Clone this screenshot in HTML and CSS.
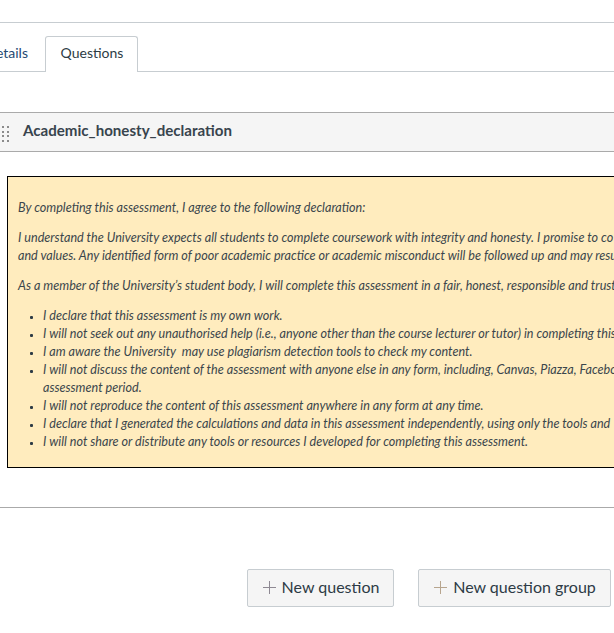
FILE: index.html
```html
<!DOCTYPE html>
<html lang="en">
<head>
<meta charset="utf-8">
<title>Quiz questions</title>
<link rel="stylesheet" href="styles.css">
</head>
<body>
<nav class="tabs"><a class="tab">Details</a><a class="tab active">Questions</a></nav>
<section class="group">
  <header class="group-header">
    <svg class="grip" width="8" height="17" viewBox="0 0 8 17"><path d="M1 0h2v2H1zM6 0h2v2H6zM1 5h2v2H1zM6 5h2v2H6zM1 9h2v2H1zM6 9h2v2H6zM1 14h2v2H1zM6 14h2v2H6z"/></svg>
    <h2>Academic_honesty_declaration</h2>
  </header>
  <div class="declaration">
    <p>By completing this assessment, I agree to the following declaration:</p>
    <p>I understand the University expects all students to complete coursework with integrity and honesty. I promise to co<br>and values. Any identified form of poor academic practice or academic misconduct will be followed up and may resu</p>
    <p>As a member of the University’s student body, I will complete this assessment in a fair, honest, responsible and trust</p>
    <ul>
      <li>I declare that this assessment is my own work.</li>
      <li>I will not seek out any unauthorised help (i.e., anyone other than the course lecturer or tutor) in completing this</li>
      <li>I am aware the University&nbsp; may use plagiarism detection tools to check my content.</li>
      <li>I will not discuss the content of the assessment with anyone else in any form, including, Canvas, Piazza, Facebo<br>assessment period.</li>
      <li>I will not reproduce the content of this assessment anywhere in any form at any time.</li>
      <li>I declare that I generated the calculations and data in this assessment independently, using only the tools and</li>
      <li>I will not share or distribute any tools or resources I developed for completing this assessment.</li>
    </ul>
  </div>
</section>
<footer class="actions">
  <button><svg class="plus" width="13" height="13" viewBox="0 0 13 13"><path d="M6.5 0v13M0 6.5h13"/></svg><span>New question</span></button>
  <button class="wide"><svg class="plus warm" width="13" height="13" viewBox="0 0 13 13"><path d="M6.5 0v13M0 6.5h13"/></svg><span>New question group</span></button>
</footer>
</body>
</html>
```
FILE: styles.css
```css
* { box-sizing: border-box; }
body { margin: 0; width: 614px; height: 633px; overflow: hidden; background: #fff; color: #2d3b45; font-family: Lato, "Liberation Sans", sans-serif; padding-top: 22px; }
.tabs { height: 50px; border-top: 1px solid #c7cdd1; border-bottom: 1px solid #c7cdd1; display: flex; align-items: flex-end; font-size: 14px; line-height: 34px; }
.tab { width: 45px; height: 35px; display: flex; justify-content: flex-end; padding-right: 17px; white-space: nowrap; color: #264a73; }
.tab.active { width: 93px; height: 36px; margin-bottom: -1px; background: #fff; border: 1px solid #c7cdd1; border-bottom: 0; border-radius: 3px 3px 0 0; justify-content: center; padding: 0 0 0 1px; line-height: 32px; color: #2d3b45; }
.group { margin-top: 40px; height: 396px; border-bottom: 1px solid #aaa; }
.group-header { height: 40px; background: #f5f5f5; border-top: 1px solid #aaa; border-bottom: 1px solid #aaa; display: flex; align-items: center; padding-left: 1px; }
.grip { fill: #8b8b8b; margin-top: 4px; }
h2 { font-size: 15.1px; line-height: 20px; margin: 0 0 4px 14px; font-weight: 700; color: #38444d; }
.declaration { height: 292px; margin: 24px -1px 0 7px; border: 1px solid #000; border-right: 0; background: #ffecbe; padding: 22px 0 22px 10px; font-size: 12.6px; line-height: 18px; font-style: italic; white-space: nowrap; color: #3b464c; }
.declaration p { margin: 0 0 12px; }
.declaration ul { margin: 0; padding-left: 25px; list-style: none; }
.declaration li { position: relative; }
.declaration li::before { content: ""; position: absolute; left: -13px; top: 9px; width: 3px; height: 3px; border-radius: 1px; background: #2d3b45; }
.actions { display: flex; gap: 24px; padding: 61px 0 0 247px; }
button { width: 147px; height: 38px; flex: none; border: 1px solid #c7cdd1; border-radius: 2px; background: #f5f5f5; color: #2d3b45; font: 16px Lato, sans-serif; display: flex; align-items: center; justify-content: center; gap: 6px; padding: 0 0 3px 1px; white-space: nowrap; }
.wide { width: 193px; }
.plus { fill: none; stroke: #8e8993; stroke-width: 1; margin-top: 1px; }
.warm { stroke: #b7a58e; }
```
